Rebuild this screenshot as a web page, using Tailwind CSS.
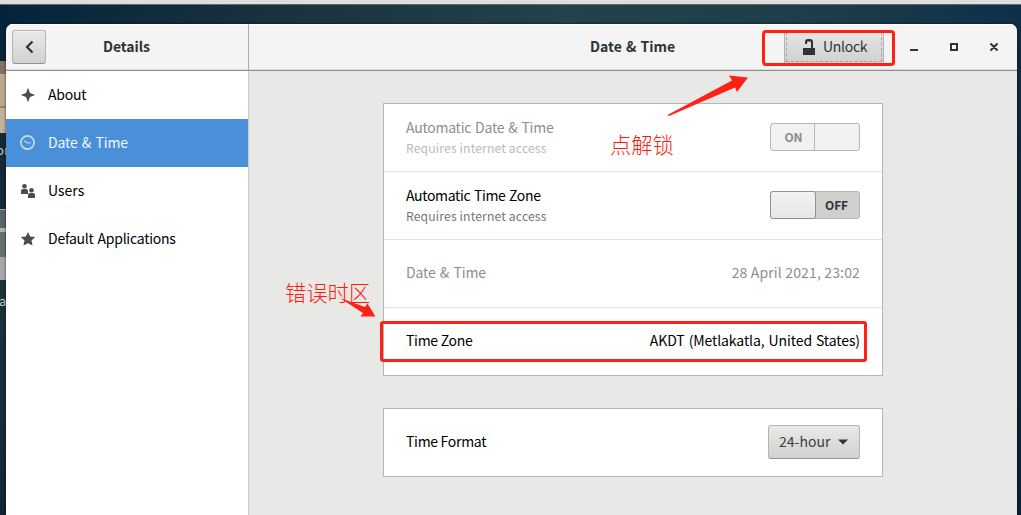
<!DOCTYPE html>
<html lang="en">
<head>
<meta charset="utf-8">
<title>Date &amp; Time</title>
<script src="https://cdn.jsdelivr.net/npm/@tailwindcss/browser@4"></script>
</head>
<body class="relative h-[515px] w-[1021px] overflow-hidden bg-[linear-gradient(90deg,#04243c_0%,#18313d_25%,#23424b_55%,#1e3f49_78%,#0e304a_100%)] font-['Noto_Sans_CJK_SC',sans-serif] text-[14px] leading-5 text-black">

<!-- desktop behind the window -->
<div class="absolute inset-y-0 left-0 flex w-1.5 flex-col overflow-hidden text-[13px] text-[#c5cdd0]">
  <div class="h-[61px] shrink-0 bg-[#04243c]"></div>
  <div class="h-[13px] shrink-0 bg-[#7e7365]"></div>
  <div class="h-[34px] shrink-0 border-b-2 border-[#988571] bg-[#bda994]"></div>
  <div class="h-[25px] shrink-0 bg-[#c4b19c]"></div>
  <div class="h-[76px] shrink-0 bg-[#142b35] pt-[7px]"><span class="-ml-[4px]">or</span></div>
  <div class="h-[19px] shrink-0 border-t border-[#aaa] bg-[#59656a]"></div>
  <div class="h-[29px] shrink-0 border-t-4 border-[#b0b2b2] bg-[#687074]"></div>
  <div class="h-[23px] shrink-0 bg-[#a5a8a9]"></div>
  <div class="grow bg-[linear-gradient(#1a323c,#172e38_60%,#102630)] pt-[11px]"><span class="-ml-px">a</span></div>
</div>
<div class="absolute inset-y-0 right-0 w-1 bg-[linear-gradient(#0e304a,#0b2538_40%,#072238)]"></div>
<div class="absolute inset-x-0 top-0 h-[5px] border-b border-[#666] bg-[#dedede]"></div>

<main class="absolute left-1.5 top-6 flex h-[491px] w-[1011px] flex-col overflow-hidden rounded-t-[7px] bg-[#e8e8e7] shadow-[0_0_3px_rgba(0,0,0,0.7)]">
  <header class="flex h-[47px] shrink-0 border-b border-[#8f8f8f] bg-[#f4f4f4] font-bold text-[#2e3436] shadow-[inset_0_-1px_#dadad9,inset_0_1px_#fff]">
    <div class="flex w-[243px] items-center border-r border-[#adadab] pl-1.5">
      <button class="flex h-[34px] w-[34px] items-center justify-center rounded-[3px] border border-[#b4b4b1] border-b-[#92928e] bg-[linear-gradient(#e9e9e7,#d1d1cf)] shadow-[inset_0_1px_#f5f5f4]">
        <svg width="16" height="16" viewBox="0 0 16 16" fill="none" stroke="#2e3436" stroke-width="2.200"><path d="M11.500 2.500 6 8l5.500 5.500"/></svg>
      </button>
      <h2 class="ml-[57px] -mt-[3px] text-[14px] tracking-[-0.08px]">Details</h2>
    </div>
    <div class="flex grow items-center pl-[341px]">
      <h1 class="-mt-[3px] w-[86px] whitespace-nowrap text-[14px] [word-spacing:1px]">Date &amp; Time</h1>
      <button class="ml-[108px] flex h-[34px] w-[100px] items-center gap-2 border border-[#b4b4b1] bg-[linear-gradient(#e6e6e4,#d0d0ce)] pl-[17px] font-normal outline-1 -outline-offset-3 outline-dashed outline-[#a4a4a1]">
        <svg width="14" height="16" viewBox="0 0 14 16" fill="#2e3436"><path d="M1 9h12v7H1zM9 9V3.800Q9 2.500 8 2.500H6Q5 2.500 5 3.800V5H3V3Q3 0 6 0h2Q11 0 11 3V9z"/></svg>
        <span class="-ml-px -mt-0.5 tracking-[-0.3px]">Unlock</span>
      </button>
      <svg class="ml-[25px]" width="90" height="16" viewBox="0 0 90 16" fill="none" stroke="#2e3436" stroke-width="2"><path d="M1 11h8M42 5h6v6h-6zM81.500 4.500l7 7M88.500 4.500l-7 7"/></svg>
    </div>
  </header>

  <div class="flex grow">
    <nav class="w-[243px] shrink-0 border-r border-[#cdcdcb] bg-white">
      <a class="flex h-12 items-center gap-3 pl-3.5">
        <svg width="16" height="16" viewBox="0 0 16 16" fill="#4a4d4e"><path d="M8 .8 10 6l5.200 2L10 10 8 15.200 6 10 .8 8 6 6z"/></svg>
        <span class="-mt-0.5 tracking-[-0.2px]">About</span>
      </a>
      <a class="flex h-12 items-center gap-3 bg-[#4a90d9] pl-3.5 text-[#f3f8fd]">
        <svg width="16" height="16" viewBox="0 0 16 16" fill="none" stroke="#c3dbf3" stroke-width="1.700"><circle cx="7.500" cy="7.500" r="6.600"/><path d="M4 5.800 7.500 8H11" stroke-width="1.100"/></svg>
        <span class="-mt-0.5 tracking-[-0.15px] [word-spacing:1.300px]">Date &amp; Time</span>
      </a>
      <a class="flex h-12 items-center gap-3 pl-3.5">
        <svg width="16" height="16" viewBox="0 0 16 16" fill="#4a4d4e"><circle cx="4.500" cy="3.300" r="2.300"/><path d="M1 11V8q0-2 2-2h3q2 0 2 2v3z"/><circle cx="11.500" cy="7.200" r="2.300"/><path d="M8 15v-3q0-2 2-2h3q2 0 2 2v3z"/></svg>
        <span class="-mt-0.5">Users</span>
      </a>
      <a class="flex h-12 items-center gap-3 pl-3.5">
        <svg width="16" height="16" viewBox="0 0 16 16" fill="#4a4d4e"><path d="m8 1 2.200 4.500 5 .5-3.700 3.400 1.100 5.200L8 12.200l-4.600 2.400 1.100-5.200L.8 6l5-.5z"/></svg>
        <span class="-mt-0.5 tracking-[-0.24px] [word-spacing:1px]">Default Applications</span>
      </a>
    </nav>

    <div class="flex grow flex-col gap-8 pl-[134px] pt-8">
      <section class="w-[500px] border border-[#b6b6b3] bg-white">
        <div class="flex h-[68px] items-center justify-between border-b border-[#e2e2e1] px-[22px] text-[#8b8e8f]">
          <div>
            <p class="-mt-px mb-px tracking-[-0.25px] [word-spacing:1.100px]">Automatic Date &amp; Time</p>
            <p class="text-[12.2px] tracking-[0.13px] text-[#b9bbbb]">Requires internet access</p>
          </div>
          <div class="-mt-px flex h-7 w-[90px] rounded-[3px] border border-[#b6b6b3] bg-[#f1f1f1] text-[12px] font-bold leading-[25px]">
            <span class="w-[44px] border-r border-[#b6b6b3] pl-0.5 text-center">ON</span>
          </div>
        </div>
        <div class="flex h-[68px] items-center justify-between border-b border-[#e2e2e1] px-[22px]">
          <div>
            <p class="-mt-px mb-px tracking-[-0.34px] [word-spacing:0.800px]">Automatic Time Zone</p>
            <p class="text-[12.2px] tracking-[0.13px] text-[#757575]">Requires internet access</p>
          </div>
          <div class="-mt-px flex h-7 w-[90px] rounded-[3px] border border-[#b6b6b3] bg-[#cfcfcd] text-[12px] font-bold leading-[25px] text-[#2e3436]">
            <span class="-m-px w-[46px] rounded-[3px] border border-[#92928e] bg-[linear-gradient(#f3f3f2,#e6e6e4)]"></span>
            <span class="grow pr-px text-center tracking-[-0.1px]">OFF</span>
          </div>
        </div>
        <div class="flex h-[68px] items-center justify-between border-b border-[#e2e2e1] px-[22px] pb-[3px] text-[#8b8e8f]">
          <span class="tracking-[-0.15px] [word-spacing:1.300px]">Date &amp; Time</span><span class="tracking-[0.15px]">28 April 2021, 23:02</span>
        </div>
        <div class="flex h-[67px] items-center justify-between px-[22px] pb-1">
          <span class="tracking-[-0.28px]">Time Zone</span><span class="tracking-[-0.1px] [word-spacing:1px]">AKDT (Metlakatla, United States)</span>
        </div>
      </section>
      <section class="flex h-[69px] w-[500px] items-center justify-between border border-[#b6b6b3] bg-white px-[22px]">
        <span class="-mt-1 tracking-[-0.3px]">Time Format</span>
        <button class="-mt-px flex h-[34px] w-[92px] items-center justify-between rounded-[3px] border border-[#b4b4b1] border-b-[#92928e] bg-[linear-gradient(#e9e9e7,#d1d1cf)] pl-2.5 pr-[11px] text-[#3a4042]">
          <span class="-mt-[3px]">24-hour</span>
          <svg width="10" height="6" viewBox="0 0 10 6" fill="#2e3436"><path d="M0 .5h10L5 5.500z"/></svg>
        </button>
      </section>
    </div>
  </div>
</main>

<!-- annotations -->
<div class="absolute left-[762px] top-[30px] h-9 w-[133px] rounded-[4px] border-3 border-[#ff2116]"></div>
<div class="absolute left-[380px] top-[321px] h-[41px] w-[487px] rounded-[3px] border-3 border-[#ff2116]"></div>
<p class="absolute left-[610px] top-[128px] text-[21.3px] font-light leading-8 text-[#ff1a10]">点解锁</p>
<p class="absolute left-[285px] top-[276px] text-[21.3px] font-light leading-8 text-[#ff1a10]">错误时区</p>
<svg class="absolute inset-0" width="1021" height="515" viewBox="0 0 1021 515" fill="#ff2116"><path d="M667.500 115 732 80.500 729 75.500 748 77.500 737 92 735 87.500 669 116zM340 298 365 307 367.500 303.500 375.500 316.500 360.500 316.500 363 313z"/></svg>
</body>
</html>
